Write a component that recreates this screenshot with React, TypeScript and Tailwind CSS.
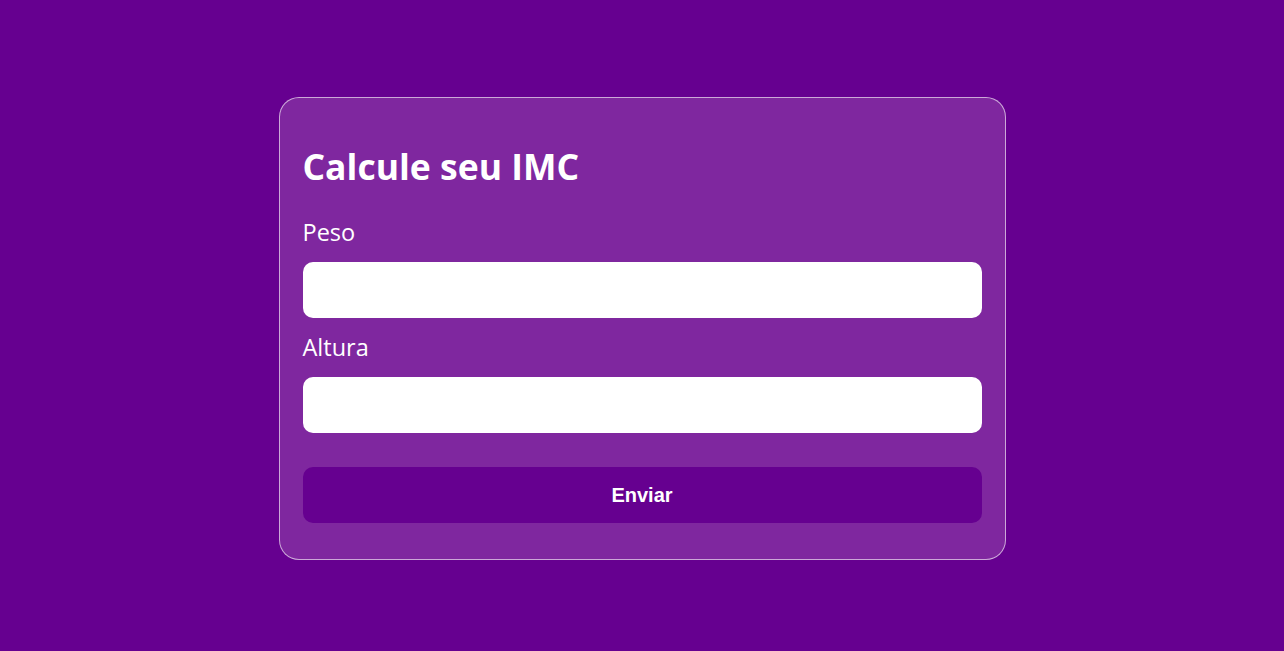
export default function App() {
  return (
    <main className="flex min-h-[651px] w-full justify-center bg-[#660090] pt-[97px] font-['Open_Sans',sans-serif]">
      <form
        className="flex h-fit w-[727px] flex-col rounded-[20px] border border-white/60 bg-[#7f279f] px-[23px] pt-[44px] pb-[36px]"
        onSubmit={(e) => e.preventDefault()}
      >
        <h1 className="text-[35.5px] leading-[49px] font-bold text-white">Calcule seu IMC</h1>

        <label htmlFor="peso" className="mt-[26px] text-[23.5px] leading-[30px] text-white">
          Peso
        </label>
        <input id="peso" type="text" className="mt-[15px] h-[56px] w-full rounded-[10px] bg-white px-4 text-lg outline-none" />

        <label htmlFor="altura" className="mt-[14px] text-[23.5px] leading-[30px] text-white">
          Altura
        </label>
        <input id="altura" type="text" className="mt-[15px] h-[56px] w-full rounded-[10px] bg-white px-4 text-lg outline-none" />

        <button
          type="submit"
          className="mt-[34px] h-[56px] w-full rounded-[10px] bg-[#660090] font-['Liberation_Sans',Arial,sans-serif] text-[20px] font-bold text-white"
        >
          Enviar
        </button>
      </form>
    </main>
  );
}
